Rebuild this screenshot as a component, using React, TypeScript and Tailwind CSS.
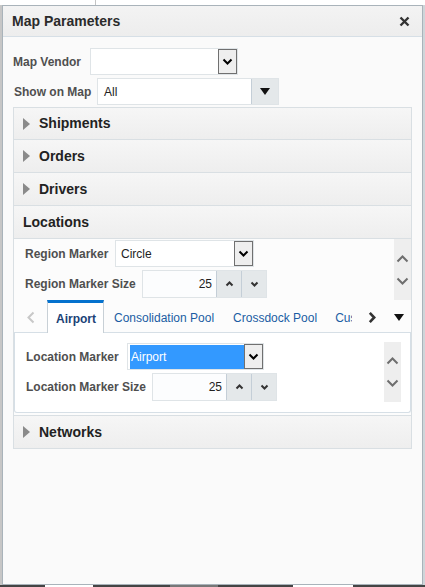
import React from 'react';

type Dir = 'up' | 'down' | 'left' | 'right';

function Chev({
  dir,
  w,
  h,
  sw = 2,
  color = '#333',
}: {
  dir: Dir;
  w: number;
  h: number;
  sw?: number;
  color?: string;
}) {
  const p = sw / 2 + 0.5;
  let d = '';
  if (dir === 'down') d = `M${p} ${p} L${w / 2} ${h - p} L${w - p} ${p}`;
  if (dir === 'up') d = `M${p} ${h - p} L${w / 2} ${p} L${w - p} ${h - p}`;
  if (dir === 'right') d = `M${p} ${p} L${w - p} ${h / 2} L${p} ${h - p}`;
  if (dir === 'left') d = `M${w - p} ${p} L${p} ${h / 2} L${w - p} ${h - p}`;
  return (
    <svg width={w} height={h} viewBox={`0 0 ${w} ${h}`} className="block">
      <path d={d} fill="none" stroke={color} strokeWidth={sw} />
    </svg>
  );
}

function TriRight() {
  return (
    <svg width="7" height="12" viewBox="0 0 7 12" className="block shrink-0">
      <polygon points="0,0 7,6 0,12" fill="#8a8a8a" />
    </svg>
  );
}

function TriDown() {
  return (
    <svg width="10" height="7" viewBox="0 0 10 7" className="block">
      <polygon points="0,0 10,0 5,7" fill="#111" />
    </svg>
  );
}

// native-looking select with the boxed chevron
function NativeSelect({
  width,
  value,
  selected = false,
}: {
  width: string;
  value: string;
  selected?: boolean;
}) {
  return (
    <div className={`${width} h-[27px] flex border border-[#dfe4e7] bg-white`}>
      <div className="flex-1 flex items-center min-w-0">
        {selected ? (
          <div className="ml-[2px] mt-[1px] h-[24px] flex-1 bg-[#3399ff] text-white flex items-center pl-[1px] text-[12px]">
            {value}
          </div>
        ) : (
          <span className="pl-[5px] text-[12px] text-[#222]">{value}</span>
        )}
      </div>
      <div className="w-[19px] h-full border border-[#707070] bg-[#eeeeee] flex items-center justify-center">
        <Chev dir="down" w={11} h={7} sw={2} color="#000" />
      </div>
    </div>
  );
}

function SpinInput({ value }: { value: string }) {
  return (
    <div className="w-[125px] h-[28px] flex border border-[#dfe4e7] bg-[#fcfdfe]">
      <div className="flex-1 flex items-center justify-end pr-[4px] text-[12px] text-[#222]">
        {value}
      </div>
      <div className="w-[25px] h-full bg-[#e4e8ea] border-l border-[#c4ced7] flex items-center justify-center">
        <Chev dir="up" w={9} h={6} sw={2} color="#333" />
      </div>
      <div className="w-[25px] h-full bg-[#e4e8ea] border-l border-[#c4ced7] flex items-center justify-center">
        <Chev dir="down" w={9} h={6} sw={2} color="#333" />
      </div>
    </div>
  );
}

function ScrollBar({ height }: { height: string }) {
  return (
    <div className={`w-[17px] ${height} bg-[#eeeeee] flex flex-col items-center justify-center gap-[14px]`}>
      <Chev dir="up" w={13} h={8} sw={2} color="#6e6e6e" />
      <Chev dir="down" w={13} h={8} sw={2} color="#6e6e6e" />
    </div>
  );
}

function AccHeader({
  label,
  open = false,
  h = 'h-[33px]',
}: {
  label: string;
  open?: boolean;
  h?: string;
}) {
  return (
    <div
      className={`${h} flex items-center pl-[9px] gap-[9px] border-b border-[#d9dfe3] bg-gradient-to-b from-[#f6f6f6] to-[#eeeeee] text-[14px] font-bold text-[#222]`}
    >
      {!open && <TriRight />}
      <span>{label}</span>
    </div>
  );
}

const label = 'text-[12px] font-bold text-[#4f4f4f] shrink-0';

export default function App() {
  return (
    <div className="w-[425px] h-[587px] bg-[#cfd5d9] flex flex-col overflow-hidden font-['Liberation_Sans',Arial,sans-serif]">
      <div className="h-[5px] shrink-0 bg-white flex">
        <div className="ml-[95px] w-px bg-[#c4c4c4]" />
      </div>

      <div className="h-[580px] shrink-0 flex">
        <div className="w-[2px] bg-[#c6c6c6]" />
        <div className="w-[421px] h-full border border-[#a9b3ba] bg-[#fafafa] flex flex-col">
          {/* title bar */}
          <div className="h-[31px] shrink-0 border-b border-[#d6dfe6] bg-gradient-to-b from-[#f3f3f3] to-[#ededed] flex items-center justify-between pl-[9px] pr-[12px]">
            <span className="text-[14px] font-bold text-[#2b2b2b]">Map Parameters</span>
            <svg width="11" height="11" viewBox="0 0 11 11" className="block">
              <path d="M1.5 1.5 L9.5 9.5 M9.5 1.5 L1.5 9.5" stroke="#333" strokeWidth="2.4" />
            </svg>
          </div>

          <div className="pt-[11px] px-[10px] flex flex-col">
            <div className="h-[27px] flex items-center">
              <span className={`${label} w-[77px]`}>Map Vendor</span>
              <NativeSelect width="w-[148px]" value="" />
            </div>

            <div className="h-[27px] mt-[3px] flex items-center pl-[1px]">
              <span className={`${label} w-[83px]`}>Show on Map</span>
              <div className="w-[182px] h-[27px] flex border border-[#dfe4e7] bg-white">
                <div className="flex-1 flex items-center pl-[6px] text-[12px] text-[#222]">All</div>
                <div className="w-[27px] h-full bg-[#e4e8ea] border-l border-[#c4ced7] flex items-center justify-center">
                  <TriDown />
                </div>
              </div>
            </div>

            {/* accordion */}
            <div className="mt-[2px] border border-[#d9dfe3] flex flex-col">
              <AccHeader label="Shipments" h="h-[32px]" />
              <AccHeader label="Orders" />
              <AccHeader label="Drivers" />
              <AccHeader label="Locations" open />

              <div className="h-[177px] border-b border-[#d9dfe3] bg-[#fcfcfc] flex flex-col">
                <div className="h-[61px] shrink-0 flex overflow-hidden">
                  <div className="flex-1 pl-[11px] pt-[1px] flex flex-col gap-[3px]">
                    <div className="h-[27px] flex items-center">
                      <span className={`${label} w-[90px]`}>Region Marker</span>
                      <NativeSelect width="w-[139px]" value="Circle" />
                    </div>
                    <div className="h-[28px] flex items-center">
                      <span className={`${label} w-[117px]`}>Region Marker Size</span>
                      <SpinInput value="25" />
                    </div>
                  </div>
                  <ScrollBar height="h-[61px]" />
                </div>

                {/* tab strip */}
                <div className="h-[33px] shrink-0 flex">
                  <div className="w-[33px] pt-[3px] border-b border-[#d6dfe6] flex items-center justify-center">
                    <Chev dir="left" w={8} h={13} sw={2} color="#c8c8c8" />
                  </div>
                  <div className="w-[305px] flex overflow-hidden">
                    <div className="shrink-0 w-[57px] pt-[1px] border-t-[3px] border-t-[#0572ce] border-x border-x-[#c8d0d6] bg-white flex items-center pl-[8px] text-[12px] font-bold text-[#1b4276]">
                      Airport
                    </div>
                    <div className="shrink-0 pt-[3px] border-b border-[#d6dfe6] flex items-center whitespace-nowrap text-[12px] text-[#1a5ca3]">
                      <span className="pl-[10px] pr-[10px]">Consolidation Pool</span>
                      <span className="pl-[9px] pr-[9px]">Crossdock Pool</span>
                      <span className="pl-[9px]">Customer Pool</span>
                    </div>
                  </div>
                  <div className="flex-1 pt-[3px] border-b border-[#d6dfe6] flex items-center">
                    <div className="ml-[16px]">
                      <Chev dir="right" w={8} h={13} sw={2.6} color="#333" />
                    </div>
                    <div className="ml-[18px]">
                      <TriDown />
                    </div>
                  </div>
                </div>

                {/* tab panel */}
                <div className="h-[80px] shrink-0 border-x border-b border-[#d6dfe6] rounded-b-[3px] bg-white pt-[9px] pr-[9px] flex">
                  <div className="flex-1 pl-[11px] pt-[1px] flex flex-col gap-[3px]">
                    <div className="h-[27px] flex items-center">
                      <span className={`${label} w-[101px]`}>Location Marker</span>
                      <NativeSelect width="w-[137px]" value="Airport" selected />
                    </div>
                    <div className="h-[28px] flex items-center">
                      <span className={`${label} w-[126px]`}>Location Marker Size</span>
                      <SpinInput value="25" />
                    </div>
                  </div>
                  <ScrollBar height="h-[60px]" />
                </div>
              </div>

              <div className="h-[32px] flex items-center pl-[9px] gap-[9px] bg-gradient-to-b from-[#f6f6f6] to-[#eeeeee] text-[14px] font-bold text-[#222]">
                <TriRight />
                <span>Networks</span>
              </div>
            </div>
          </div>
        </div>
      </div>

      <div className="flex-1 bg-[#444] flex">
        <div className="ml-[45px] w-[48px] bg-white" />
        <div className="ml-[77px] w-[48px] bg-[#777]" />
        <div className="ml-[75px] w-[60px] bg-white" />
      </div>
    </div>
  );
}
